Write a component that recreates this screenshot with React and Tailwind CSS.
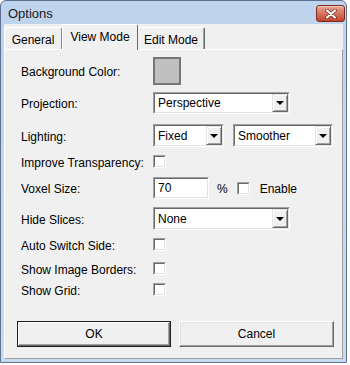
import React from 'react';

const sunken = 'border border-t-[#a0a0a0] border-l-[#a0a0a0] border-r-white border-b-white';
const sunkenInner = 'border border-t-[#696969] border-l-[#696969] border-r-[#e3e3e3] border-b-[#e3e3e3]';

const Arrow = () => (
  <div className="w-[16px] self-stretch flex items-center justify-center bg-[#f0f0f0] border border-t-[#e3e3e3] border-l-[#e3e3e3] border-r-[#696969] border-b-[#696969] shadow-[inset_1px_1px_0_#ffffff,inset_-1px_-1px_0_#a0a0a0]">
    <div className="w-0 h-0 border-l-[4px] border-r-[4px] border-t-[4px] border-l-transparent border-r-transparent border-t-black" />
  </div>
);

const Select = ({ size, value }) => (
  <div className={`${size} flex ${sunken}`}>
    <div className={`flex-1 flex items-stretch bg-white ${sunkenInner}`}>
      <span className="flex-1 flex items-center pl-[3px]">{value}</span>
      <Arrow />
    </div>
  </div>
);

const Check = () => (
  <div className={`w-[13px] h-[13px] flex ${sunken}`}>
    <div className={`flex-1 bg-white ${sunkenInner}`} />
  </div>
);

const Row = ({ label, h, mt, children }) => (
  <div className={`flex items-center ${h} ${mt}`}>
    <div className="w-[132px] shrink-0 pt-[2px]">{label}</div>
    {children}
  </div>
);

export default function App() {
  return (
    <div className="w-[350px] h-[365px] bg-white font-['Liberation_Sans',Arial,sans-serif] text-[12px] text-black leading-none">
      <div className="w-[347px] h-[363px] flex flex-col border border-[#5f7190] rounded-t-[6px] bg-gradient-to-b from-[#bed3ec] to-[#c9dbf0]">
        {/* title bar */}
        <div className="h-[23px] flex items-start justify-between shrink-0">
          <span className="pl-[7px] pt-[6px] text-[13px] text-[#1a1a1a]">Options</span>
          <div className="mt-[4px] mr-[1px] w-[29px] h-[17px] rounded-[3px] border border-[#7a2a1e] bg-gradient-to-b from-[#e9a595] to-[#c2412b] flex items-center justify-center shadow-[inset_0_1px_0_#f5c8bd]">
            <svg width="12" height="10" viewBox="0 0 12 10">
              <path d="M2 1.5 L10 8.5 M10 1.5 L2 8.5" stroke="#6b2418" strokeWidth="3.6" strokeLinecap="round" />
              <path d="M2 1.5 L10 8.5 M10 1.5 L2 8.5" stroke="#ffffff" strokeWidth="2.2" strokeLinecap="round" />
            </svg>
          </div>
        </div>

        {/* client area */}
        <div className="flex-1 mx-[3px] mb-[3px] bg-[#f0f0f0] flex flex-col">
          {/* tabs */}
          <div className="h-[25px] flex items-end shrink-0">
            <div className="w-[58px] h-[22px] flex items-center justify-center pt-[2px] border-t border-l border-r border-t-white border-l-white border-r-[#8a8a8a] rounded-t-[2px]">General</div>
            <div className="relative z-10 w-[76px] h-[26px] -mb-[1px] flex items-start justify-center pt-[6px] bg-[#f0f0f0] border-t border-l border-r border-t-white border-l-white border-r-[#696969] rounded-t-[2px]">View Mode</div>
            <div className="w-[67px] h-[22px] flex items-center justify-center pt-[2px] border-t border-r border-t-white border-r-[#696969] shadow-[inset_-1px_0_0_#a0a0a0] rounded-t-[2px]">Edit Mode</div>
          </div>

          {/* panel */}
          <div className="flex-1 flex flex-col pt-[7px] pl-[16px] border border-t-white border-l-white border-r-[#a0a0a0] border-b-[#a0a0a0]">
            <Row label="Background Color:" h="h-[28px]" mt="mt-0">
              <div className="w-[28px] h-[28px] border-2 border-[#777777] bg-[#c0c0c0]" />
            </Row>
            <Row label="Projection:" h="h-[22px]" mt="mt-[7px]">
              <Select size="w-[137px] h-[22px]" value="Perspective" />
            </Row>
            <Row label="Lighting:" h="h-[23px]" mt="mt-[10px]">
              <Select size="w-[71px] h-[23px]" value="Fixed" />
              <div className="ml-[9px]">
                <Select size="w-[100px] h-[23px]" value="Smoother" />
              </div>
            </Row>
            <Row label="Improve Transparency:" h="h-[21px]" mt="mt-[4px]">
              <Check />
            </Row>
            <Row label="Voxel Size:" h="h-[22px]" mt="mt-[5px]">
              <div className={`w-[56px] h-[22px] flex ${sunken}`}>
                <div className={`flex-1 flex items-center pl-[3px] bg-white ${sunkenInner}`}>70</div>
              </div>
              <span className="ml-[8px] pt-[2px]">%</span>
              <div className="ml-[9px]">
                <Check />
              </div>
              <span className="ml-[10px] pt-[2px]">Enable</span>
            </Row>
            <Row label="Hide Slices:" h="h-[23px]" mt="mt-[8px]">
              <Select size="w-[137px] h-[23px]" value="None" />
            </Row>
            <Row label="Auto Switch Side:" h="h-[21px]" mt="mt-[4px]">
              <Check />
            </Row>
            <Row label="Show Image Borders:" h="h-[21px]" mt="mt-[3px]">
              <Check />
            </Row>
            <Row label="Show Grid:" h="h-[21px]" mt="mt-0">
              <Check />
            </Row>

            {/* buttons */}
            <div className="flex mt-[21px] -ml-[4px]">
              <div className="w-[154px] h-[26px] border border-[#1e1e1e] flex">
                <div className="flex-1 flex items-center justify-center bg-[#f0f0f0] border border-t-white border-l-white border-r-[#696969] border-b-[#696969] shadow-[inset_-1px_-1px_0_#a0a0a0]">OK</div>
              </div>
              <div className="ml-[8px] w-[155px] h-[26px] flex items-center justify-center bg-[#f0f0f0] border border-t-white border-l-white border-r-[#696969] border-b-[#696969] shadow-[inset_-1px_-1px_0_#a0a0a0,inset_1px_1px_0_#e3e3e3]">Cancel</div>
            </div>
          </div>
        </div>
      </div>
    </div>
  );
}
